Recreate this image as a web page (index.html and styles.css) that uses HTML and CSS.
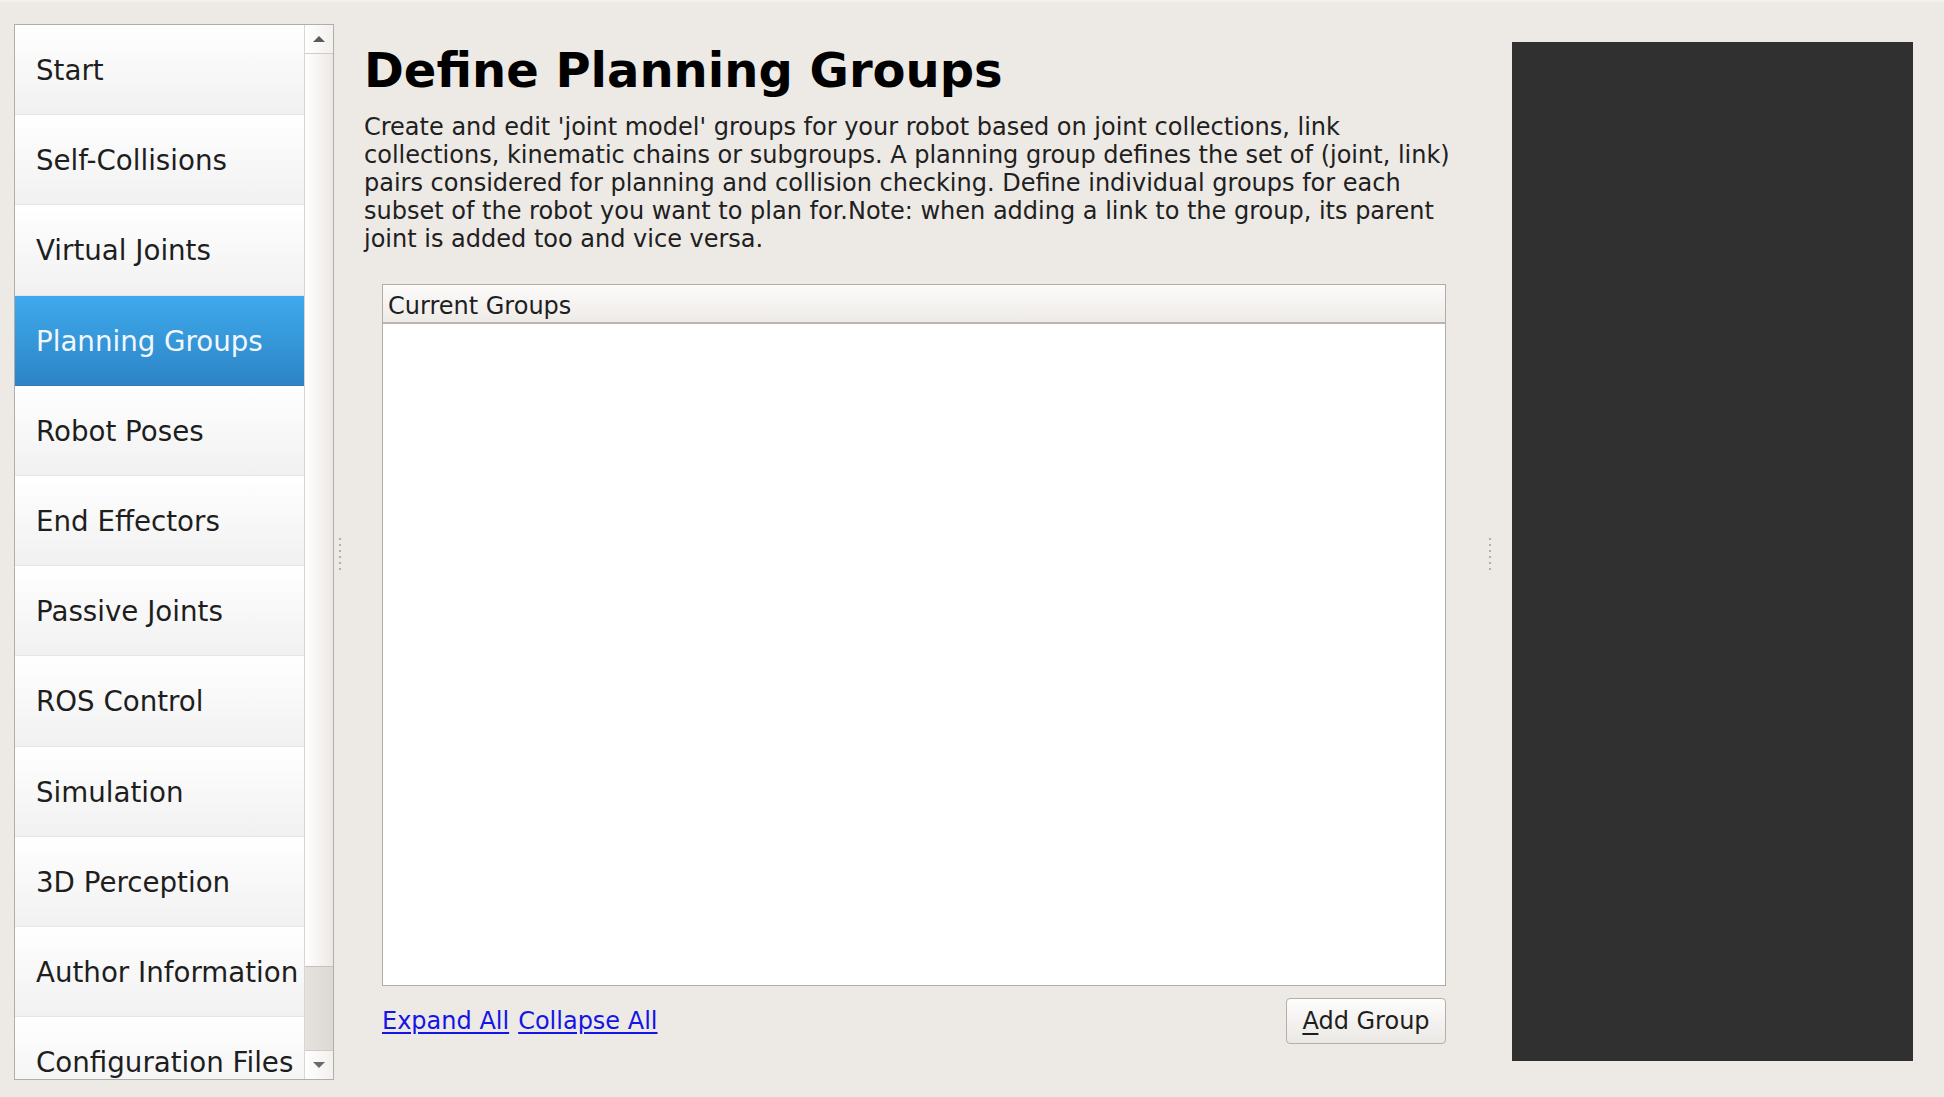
FILE: index.html
```html
<!DOCTYPE html>
<html>
<head>
<meta charset="utf-8">
<title>Define Planning Groups</title>
<link rel="stylesheet" href="styles.css">
</head>
<body>
<div class="app">
  <div class="sidebar">
    <ul class="nav">
      <li class="nav-item">Start</li>
      <li class="nav-item">Self-Collisions</li>
      <li class="nav-item">Virtual Joints</li>
      <li class="nav-item active">Planning Groups</li>
      <li class="nav-item">Robot Poses</li>
      <li class="nav-item">End Effectors</li>
      <li class="nav-item">Passive Joints</li>
      <li class="nav-item">ROS Control</li>
      <li class="nav-item">Simulation</li>
      <li class="nav-item">3D Perception</li>
      <li class="nav-item">Author Information</li>
      <li class="nav-item">Configuration Files</li>
    </ul>
    <div class="scrollbar">
      <div class="sb-btn sb-up"><span class="tri-up"></span></div>
      <div class="sb-handle"></div>
      <div class="sb-track"></div>
      <div class="sb-btn sb-down"><span class="tri-down"></span></div>
    </div>
  </div>

  <div class="handle handle-left"><span></span><span></span><span></span><span></span><span></span><span></span></div>

  <main class="main">
    <h1 class="title">Define Planning Groups</h1>
    <p class="desc">Create and edit 'joint model' groups for your robot based on joint collections, link<br>collections, kinematic chains or subgroups. A planning group defines the set of (joint, link)<br>pairs considered for planning and collision checking. Define individual groups for each<br>subset of the robot you want to plan for.Note: when adding a link to the group, its parent<br>joint is added too and vice versa.</p>
    <div class="tree">
      <div class="tree-header">Current Groups</div>
      <div class="tree-body"></div>
    </div>
    <div class="actions">
      <div class="links">
        <a class="link" href="#">Expand All</a>
        <a class="link" href="#">Collapse All</a>
      </div>
      <button class="btn"><u>A</u>dd Group</button>
    </div>
  </main>

  <div class="handle handle-right"><span></span><span></span><span></span><span></span><span></span><span></span></div>

  <div class="viewer"></div>
</div>
</body>
</html>
```

FILE: styles.css
```css
* { box-sizing: border-box; }

html, body {
  margin: 0;
  padding: 0;
  background: #edeae6;
}

body {
  font-family: "DejaVu Sans", "Liberation Sans", sans-serif;
  color: #1c1c1c;
  width: 1944px;
  height: 1097px;
  overflow: hidden;
  border-top: 2px solid #f4f2ef;
}

.app {
  display: flex;
  align-items: flex-start;
  height: 1095px;
  padding-left: 14px;
}

/* Sidebar list */
.sidebar {
  display: flex;
  width: 320px;
  height: 1056px;
  margin-top: 22px;
  border: 1px solid #b1ada8;
  background: #ffffff;
  overflow: hidden;
  flex-shrink: 0;
}

.nav {
  list-style: none;
  margin: 0;
  padding: 0;
  width: 289px;
  flex-shrink: 0;
}

.nav-item {
  height: 90.2px;
  display: flex;
  align-items: center;
  padding-left: 21px;
  padding-top: 2px;
  font-size: 27.7px;
  color: #1e1e1e;
  white-space: nowrap;
  background: linear-gradient(to bottom, #ffffff 0%, #f1f1f1 100%);
  border-bottom: 1px solid #e6e6e6;
}

.nav-item.active {
  background: linear-gradient(to bottom, #3eaaec 0%, #2d84c6 100%);
  color: #f3f7fb;
  border-bottom-color: #2b7fc0;
}

.scrollbar {
  width: 29px;
  display: flex;
  flex-direction: column;
  border-left: 1px solid #d9d6d2;
  background: #dedbd7;
}

.sb-btn {
  height: 29px;
  display: flex;
  align-items: center;
  justify-content: center;
  background: linear-gradient(to right, #ffffff, #f2f0ed);
  flex-shrink: 0;
}

.sb-up { border-bottom: 1px solid #cfccc8; }
.sb-down { border-top: 1px solid #cfccc8; }

.tri-up, .tri-down {
  width: 0;
  height: 0;
  border-left: 6px solid transparent;
  border-right: 6px solid transparent;
}
.tri-up { border-bottom: 6px solid #5a5a5a; }
.tri-down { border-top: 6px solid #6a6a6a; }

.sb-handle {
  height: 913px;
  background: linear-gradient(to right, #ffffff 0%, #f6f4f2 50%, #ebe8e4 100%);
  border-bottom: 1px solid #c4c1bc;
}

.sb-track {
  flex: 1;
  background: linear-gradient(to right, #e6e3df, #dcd9d5);
}

/* Splitter handles */
.handle {
  width: 12px;
  height: 1056px;
  margin-top: 22px;
  display: flex;
  flex-direction: column;
  align-items: center;
  justify-content: center;
  gap: 4px;
  padding-top: 4px;
  flex-shrink: 0;
}

.handle span {
  width: 2px;
  height: 2px;
  background: #b3afaa;
}

.handle-left { margin-right: 18px; }
.handle-right { margin-left: 38px; margin-right: 16px; }

/* Main content */
.main {
  width: 1082px;
  padding-top: 40px;
  flex-shrink: 0;
}

.title {
  margin: 0;
  font-size: 48px;
  line-height: 56px;
  font-weight: bold;
  color: #000;
  white-space: nowrap;
}

.desc {
  margin: 15px 0 0 0;
  font-size: 24px;
  line-height: 28px;
  color: #202020;
  white-space: nowrap;
}

.tree {
  margin: 31px 0 0 18px;
  height: 702px;
  border: 1px solid #b0aca7;
  background: #fff;
  display: flex;
  flex-direction: column;
}

.tree-header {
  height: 39px;
  padding-left: 5px;
  padding-top: 4px;
  display: flex;
  align-items: center;
  font-size: 24px;
  color: #1e1e1e;
  background: linear-gradient(to bottom, #fcfbfa, #eeebe7);
  border-bottom: 2px solid #b9b5b0;
  flex-shrink: 0;
}

.tree-body {
  flex: 1;
  background: #fff;
}

.actions {
  margin: 12px 0 0 18px;
  display: flex;
  align-items: center;
  justify-content: space-between;
}

.links {
  display: flex;
  gap: 9px;
}

.link {
  font-size: 24px;
  color: #1414e6;
  text-decoration: underline;
  text-underline-offset: 3px;
}

.btn {
  width: 160px;
  height: 46px;
  border: 1px solid #b2aea9;
  border-radius: 4px;
  background: linear-gradient(to bottom, #fdfdfc, #ebe8e4);
  font-family: "DejaVu Sans", "Liberation Sans", sans-serif;
  font-size: 24px;
  color: #1e1e1e;
  padding: 0;
  margin-right: 0;
}

.btn u { text-underline-offset: 4px; }

/* Right viewer panel */
.viewer {
  width: 401px;
  height: 1019px;
  margin-top: 40px;
  background: #303030;
  flex-shrink: 0;
}
```
